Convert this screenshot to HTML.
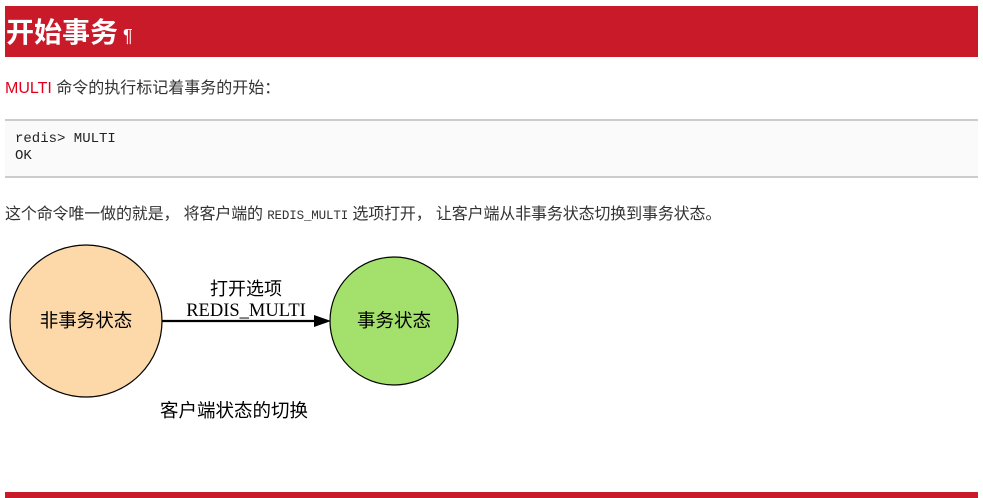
<!DOCTYPE html>
<html><head><meta charset="utf-8"><style>
body{margin:0;background:#fff;width:983px;height:498px;overflow:hidden;position:relative;font-family:"Liberation Sans","Noto Sans CJK SC",sans-serif;color:#333}
.h{position:absolute;left:5px;top:6px;width:973px;height:51px;background:#c91a29;color:#fff;font-weight:bold;font-size:28px;line-height:54px;text-indent:1px}
.h span{font-size:18px;font-weight:normal;margin-left:5px}
.p{position:absolute;left:5px;font-size:16px;white-space:nowrap}
.code{position:absolute;left:5px;top:119px;width:973px;height:55px;background:#fafafa;border-top:2px solid #ccc;border-bottom:2px solid #ccc;font-family:"Liberation Mono",monospace;font-size:14px;color:#222;line-height:17px}
.code pre{margin:10px 0 0 10px;font-family:inherit}
.m{font-family:"Liberation Mono",monospace;font-size:12.5px}
.bar{position:absolute;left:5px;top:492px;width:973px;height:6px;background:#c91a29}
</style></head><body>
<div class="h">开始事务<span>¶</span></div>
<div class="p" style="top:74px"><span style="color:#e0001a">MULTI</span> 命令的执行标记着事务的开始：</div>
<div class="code"><pre>redis&gt; MULTI
OK</pre></div>
<div class="p" style="top:200px;letter-spacing:-0.15px">这个命令唯一做的就是， 将客户端的 <span class="m">REDIS_MULTI</span> 选项打开， 让客户端从非事务状态切换到事务状态。</div>
<svg style="position:absolute;left:0;top:240px" width="480" height="200">
<circle cx="86" cy="81" r="76" fill="#fdd8a8" stroke="#000" stroke-width="1.2"/>
<circle cx="394" cy="81" r="64" fill="#a3e06c" stroke="#000" stroke-width="1.2"/>
<line x1="162" y1="81" x2="316" y2="81" stroke="#000" stroke-width="2.2"/>
<polygon points="314,75 331,81 314,87" fill="#000"/>
<g font-family="Liberation Serif,Noto Serif CJK SC,serif" font-size="18.5" fill="#000" text-anchor="middle">
<text x="86" y="87" font-family="Noto Sans CJK SC,sans-serif" font-size="18.5">非事务状态</text>
<text x="394" y="87" font-family="Noto Sans CJK SC,sans-serif" font-size="18.5">事务状态</text>
<text x="246" y="55" font-family="Noto Sans CJK SC,sans-serif" font-size="18">打开选项</text>
<text x="246" y="76">REDIS_MULTI</text>
<text x="234" y="177" font-family="Noto Sans CJK SC,sans-serif" font-size="18.5">客户端状态的切换</text>
</g></svg>
<div class="bar"></div>
</body></html>
